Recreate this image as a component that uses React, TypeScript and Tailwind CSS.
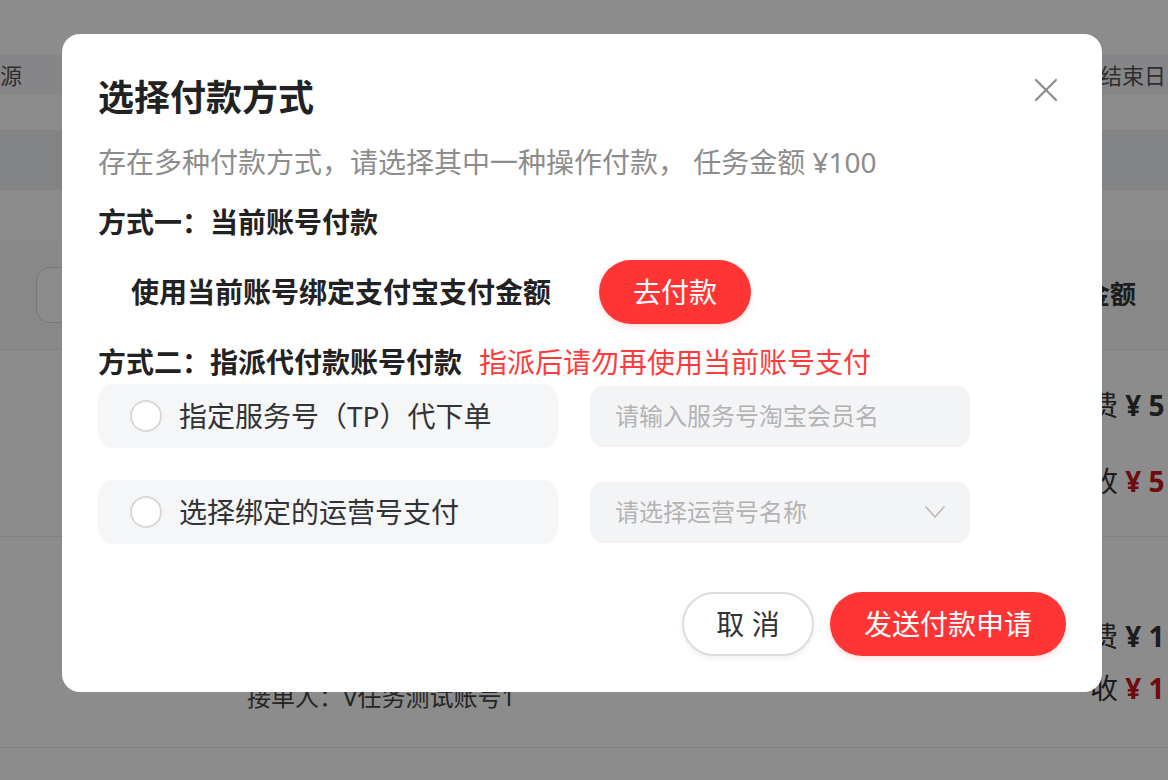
import { useState } from "react";

const font = {
  fontFamily:
    '"Noto Sans", "Noto Sans CJK SC", "Liberation Sans", sans-serif',
};

const payOptions = [
  { key: "tp", label: "指定服务号（TP）代下单", kind: "input", placeholder: "请输入服务号淘宝会员名" },
  { key: "op", label: "选择绑定的运营号支付", kind: "select", placeholder: "请选择运营号名称" },
];

function Backdrop() {
  return (
    <div className="w-full h-[780px] overflow-hidden bg-white text-[#333]">
      <div className="h-[55px]" />
      <div className="h-[40px] bg-[#f4f5f7] flex items-center justify-between text-[22px] text-[#555] whitespace-nowrap">
        <span>源</span>
        <span className="mr-[2px]">结束日</span>
      </div>
      <div className="h-[35px]" />
      <div className="h-[60px] bg-[#eceef1]" />
      <div className="h-[50px]" />
      <div className="h-[110px] bg-[#f7f8fa] flex items-center justify-between border-b border-[#e8e8e8]">
        <div className="ml-[36px] w-[60px] h-[56px] rounded-[14px] border border-[#d9d9d9] bg-white" />
        <span className="text-[26px] font-bold whitespace-nowrap mr-[32px]">金额</span>
      </div>
      <div className="h-[187px] border-b border-[#e8e8e8] flex flex-col justify-center gap-[34px] pl-[1090px] whitespace-nowrap text-[28px]">
        <div>费 <span className="font-bold">¥ 5</span></div>
        <div>收 <span className="font-bold text-[#c8161d]">¥ 5</span></div>
      </div>
      <div className="h-[211px] border-b border-[#e8e8e8]">
        <div className="flex flex-col gap-[10px] pt-[78px] pl-[1090px] whitespace-nowrap text-[28px]">
          <div>费 <span className="font-bold">¥ 1</span></div>
          <div>收 <span className="font-bold text-[#c8161d]">¥ 1</span></div>
        </div>
        <div className="pl-[247px] -mt-[30px] text-[24px] text-[#444] whitespace-nowrap">接单人：V任务测试账号1</div>
      </div>
    </div>
  );
}

function Radio({ checked }: { checked: boolean }) {
  return (
    <span
      className={
        checked
          ? "w-[32px] h-[32px] rounded-full border-[9px] border-[#ff3535] bg-white shrink-0"
          : "w-[32px] h-[32px] rounded-full border-2 border-[#d9d9d9] bg-white shrink-0"
      }
    />
  );
}

export default function App() {
  const [picked, setPicked] = useState<string | null>(null);

  return (
    <div className="relative w-[1168px] h-[780px] overflow-hidden" style={font}>
      <Backdrop />
      <div className="absolute inset-0 bg-black/45" />

      <div className="absolute left-[62px] top-[34px] w-[1040px] h-[658px] bg-white rounded-[18px] px-[36px] pt-[42px] text-[#222]">
        <button className="absolute right-[44px] top-[44px] w-[24px] h-[24px]">
          <svg width="24" height="24" viewBox="0 0 24 24" fill="none" stroke="#8c8c8c" strokeWidth="2.2" strokeLinecap="round">
            <line x1="2" y1="2" x2="22" y2="22" />
            <line x1="22" y1="2" x2="2" y2="22" />
          </svg>
        </button>

        <h2 className="text-[36px] leading-[44px] font-bold">选择付款方式</h2>
        <p className="mt-[22px] text-[28px] leading-[40px] text-[#8c8c8c]">
          存在多种付款方式，请选择其中一种操作付款， 任务金额 ¥100
        </p>

        <div className="mt-[20px] text-[28px] leading-[40px] font-bold">方式一：当前账号付款</div>
        <div className="mt-[18px] flex items-center h-[64px] pl-[33px]">
          <span className="text-[28px] font-bold">使用当前账号绑定支付宝支付金额</span>
          <button className="ml-[48px] w-[152px] h-[64px] rounded-full bg-[#ff3535] text-white text-[28px] shadow-[0_3px_6px_rgba(255,53,53,0.15)]">
            去付款
          </button>
        </div>

        <div className="mt-[18px] flex items-center text-[28px] leading-[40px]">
          <span className="font-bold">方式二：指派代付款账号付款</span>
          <span className="ml-[17px] text-[#ff3b3b]">指派后请勿再使用当前账号支付</span>
        </div>

        <div className="mt-[2px] flex flex-col gap-[32px]">
          {payOptions.map((opt) => (
            <div key={opt.key} className="flex items-center gap-[32px]">
              <div
                onClick={() => setPicked(opt.key)}
                className="w-[460px] h-[64px] rounded-[16px] bg-[#f5f6f8] flex items-center gap-[17px] pl-[32px] cursor-pointer"
              >
                <Radio checked={picked === opt.key} />
                <span className="text-[28px] text-[#333]">{opt.label}</span>
              </div>
              <div className="w-[380px] h-[61px] rounded-[14px] bg-[#f3f4f6] flex items-center justify-between pl-[25px] pr-[24px]">
                <span className="text-[24px] text-[#b3b3b3]">{opt.placeholder}</span>
                {opt.kind === "select" && (
                  <svg width="22" height="14" viewBox="0 0 22 14" fill="none" stroke="#bdbdbd" strokeWidth="1.8" strokeLinecap="round" strokeLinejoin="round">
                    <polyline points="2,2 11,12 20,2" />
                  </svg>
                )}
              </div>
            </div>
          ))}
        </div>

        <div className="mt-[48px] flex justify-end gap-[16px]">
          <button className="w-[132px] h-[64px] rounded-full border-2 border-[#dcdcdc] bg-white text-[28px] text-[#333] shadow-[0_3px_5px_rgba(0,0,0,0.06)]">
            取 消
          </button>
          <button className="w-[236px] h-[64px] rounded-full bg-[#ff3535] text-white text-[28px] shadow-[0_3px_6px_rgba(255,53,53,0.15)]">
            发送付款申请
          </button>
        </div>
      </div>
    </div>
  );
}
